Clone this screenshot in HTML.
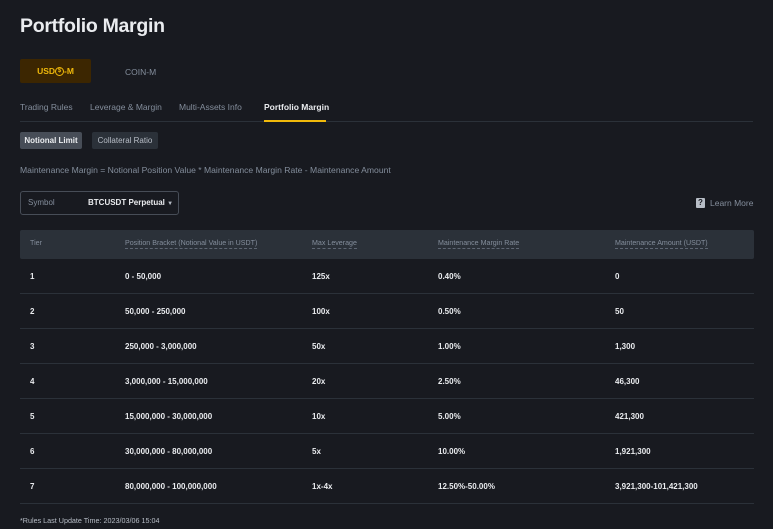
<!DOCTYPE html>
<html><head><meta charset="utf-8"><style>
*{margin:0;padding:0;box-sizing:border-box}
body{width:773px;height:529px;background:#181a20;font-family:"Liberation Sans",sans-serif;color:#eaecef;position:relative;overflow:hidden}
.a{position:absolute;white-space:nowrap}
h1{position:absolute;left:20px;top:15px;font-size:19.5px;font-weight:bold;color:#eaecef;letter-spacing:-0.3px}
.usd{left:20px;top:59px;width:71px;height:24px;background:#3c2601;border-radius:2px;color:#f0b90b;font-size:8.5px;font-weight:bold;text-align:center;line-height:24px}
.tab{font-size:8.5px;color:#848e9c;top:102px}
.tbl{position:absolute;left:20px;top:230px;width:734px}
.hd{height:29px;background:#2b3139;border-radius:2px;position:relative;font-size:7.1px;color:#848e9c}
.hd span{position:absolute;top:9px;border-bottom:1px dashed #5e6673;padding-bottom:1px}
.row{height:35px;border-bottom:1px solid #2b3139;position:relative;font-size:8px;font-weight:bold;color:#eaecef}
.row span{position:absolute;top:13px}
.c1{left:10px}.c2{left:105px}.c3{left:292px}.c4{left:418px}.c5{left:595px}
</style></head><body>
<h1>Portfolio Margin</h1>
<div class="a usd">USD<span style="display:inline-block;width:9px;height:9px;border:1px solid #f0b90b;border-radius:50%;font-size:6px;line-height:7px;vertical-align:middle">$</span>-M</div>
<div class="a" style="left:125px;top:67px;font-size:8.5px;color:#848e9c">COIN-M</div>
<div class="a tab" style="left:20px">Trading Rules</div>
<div class="a tab" style="left:90px">Leverage &amp; Margin</div>
<div class="a tab" style="left:179px">Multi-Assets Info</div>
<div class="a tab" style="left:264px;color:#eaecef;font-weight:bold">Portfolio Margin</div>
<div class="a" style="left:20px;top:121px;width:733px;height:1px;background:#2b3139"></div>
<div class="a" style="left:264px;top:120px;width:62px;height:2px;background:#f0b90b"></div>
<div class="a" style="left:20px;top:132px;width:62px;height:17px;background:#474d57;border-radius:2px;font-size:8px;font-weight:bold;line-height:17px;text-align:center">Notional Limit</div>
<div class="a" style="left:92px;top:132px;width:66px;height:17px;background:#2b3139;border-radius:2px;font-size:8px;color:#b7bdc6;line-height:17px;text-align:center">Collateral Ratio</div>
<div class="a" style="left:20px;top:165px;font-size:8.6px;color:#848e9c">Maintenance Margin = Notional Position Value * Maintenance Margin Rate - Maintenance Amount</div>
<div class="a" style="left:20px;top:191px;width:159px;height:24px;border:1px solid #474d57;border-radius:3px"></div>
<div class="a" style="left:28px;top:198px;font-size:8px;color:#848e9c">Symbol</div>
<div class="a" style="left:88px;top:198px;font-size:8px;font-weight:bold">BTCUSDT Perpetual <span style="font-size:6px;color:#b7bdc6">▼</span></div>
<div class="a" style="left:696px;top:198px;width:9px;height:10px;background:#b7bdc6;border-radius:1px;color:#181a20;font-size:8px;font-weight:bold;text-align:center;line-height:10px">?</div>
<div class="a" style="left:710px;top:198px;font-size:8.5px;color:#848e9c">Learn More</div>
<div class="tbl">
<div class="hd"><span class="c1" style="border:none">Tier</span><span class="c2">Position Bracket (Notional Value in USDT)</span><span class="c3">Max Leverage</span><span class="c4">Maintenance Margin Rate</span><span class="c5">Maintenance Amount (USDT)</span></div>
<div class="row"><span class="c1">1</span><span class="c2">0 - 50,000</span><span class="c3">125x</span><span class="c4">0.40%</span><span class="c5">0</span></div>
<div class="row"><span class="c1">2</span><span class="c2">50,000 - 250,000</span><span class="c3">100x</span><span class="c4">0.50%</span><span class="c5">50</span></div>
<div class="row"><span class="c1">3</span><span class="c2">250,000 - 3,000,000</span><span class="c3">50x</span><span class="c4">1.00%</span><span class="c5">1,300</span></div>
<div class="row"><span class="c1">4</span><span class="c2">3,000,000 - 15,000,000</span><span class="c3">20x</span><span class="c4">2.50%</span><span class="c5">46,300</span></div>
<div class="row"><span class="c1">5</span><span class="c2">15,000,000 - 30,000,000</span><span class="c3">10x</span><span class="c4">5.00%</span><span class="c5">421,300</span></div>
<div class="row"><span class="c1">6</span><span class="c2">30,000,000 - 80,000,000</span><span class="c3">5x</span><span class="c4">10.00%</span><span class="c5">1,921,300</span></div>
<div class="row"><span class="c1">7</span><span class="c2">80,000,000 - 100,000,000</span><span class="c3">1x-4x</span><span class="c4">12.50%-50.00%</span><span class="c5">3,921,300-101,421,300</span></div>
</div>
<div class="a" style="left:20px;top:516px;font-size:7.2px;color:#b7bdc6">*Rules Last Update Time: 2023/03/06 15:04</div>
</body></html>
